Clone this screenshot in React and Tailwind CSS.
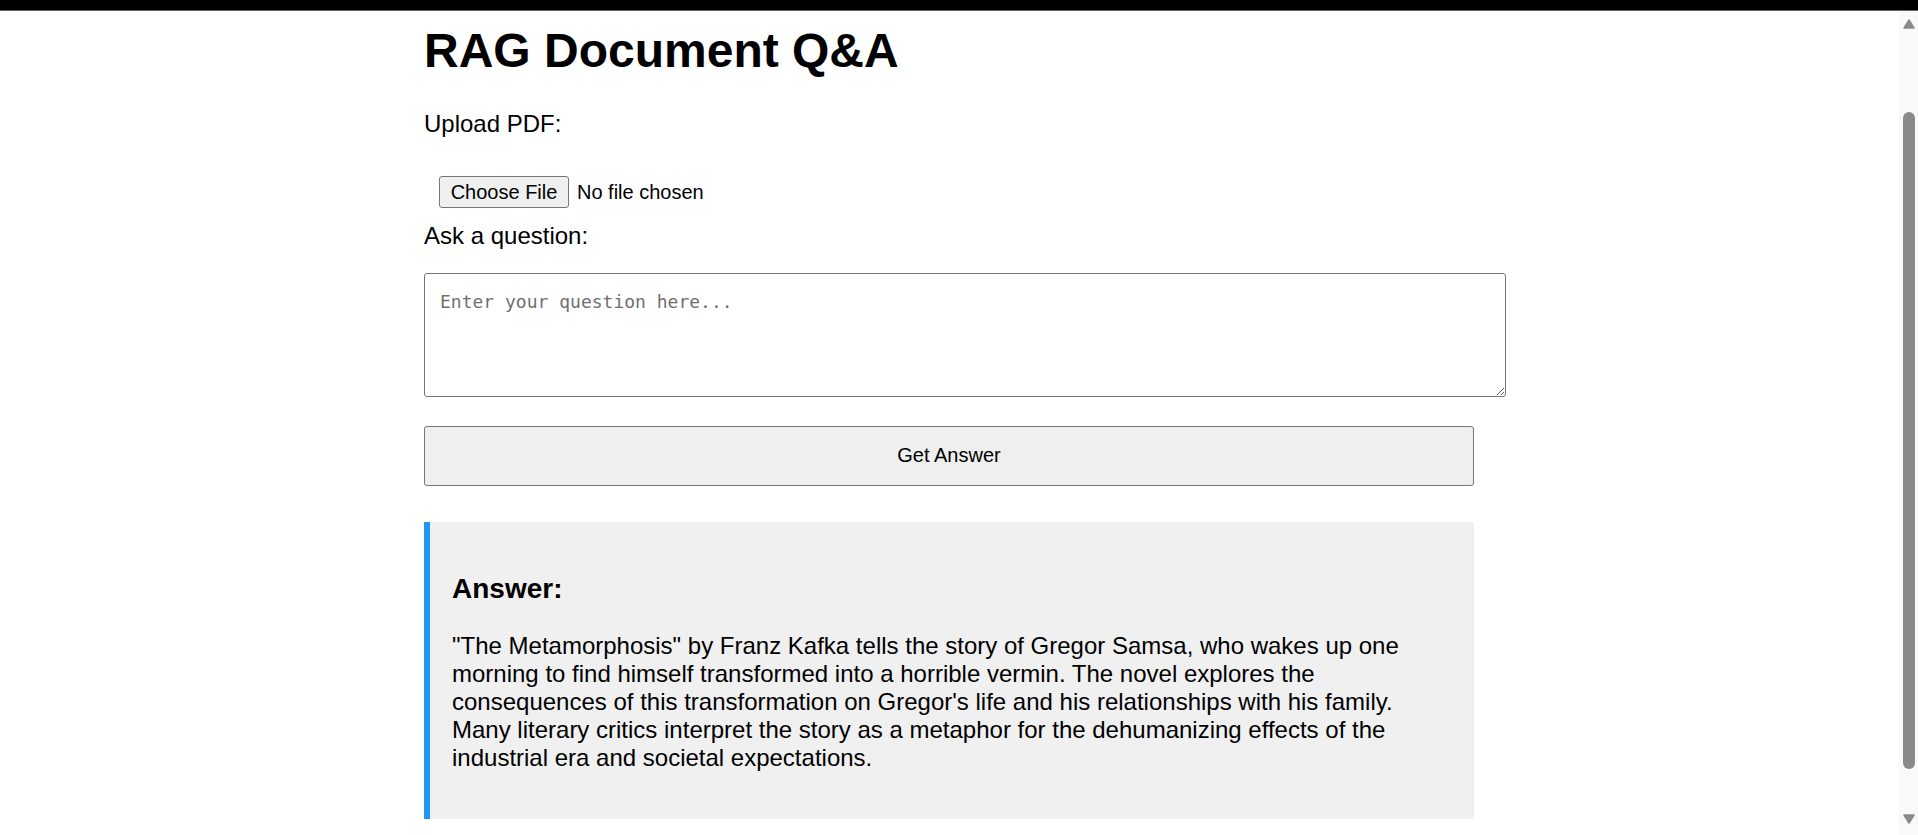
export default function App() {
    return (
        <div className="flex h-[835px] w-[1918px] flex-col overflow-hidden bg-white font-['Liberation_Sans',Arial,sans-serif] text-black">
            <div className="box-border h-[11px] border-b border-[#666] bg-black"></div>
            <div className="flex flex-1">
                <div className="flex-1 overflow-hidden">
                    <div className="mx-auto w-[1051px]">
                        <h1 className="mt-[13px] text-[48px] font-bold leading-[54px]">RAG Document Q&amp;A</h1>

                        <label className="mt-[32px] block text-[24px] leading-[28px]">Upload PDF:</label>
                        <div className="ml-[15px] mt-[38px] flex h-[32px] items-center gap-[8px] text-[20px]">
                            <button className="box-border h-[32px] w-[130px] rounded-[3px] border border-[#767676] bg-[#efefef] text-[20px] leading-none">
                                Choose File
                            </button>
                            <span>No file chosen</span>
                        </div>

                        <label className="mt-[14px] block text-[24px] leading-[28px]">Ask a question:</label>
                        <textarea
                            className="mt-[23px] box-border block h-[124px] w-[1082px] rounded-[3px] border border-[#767676] bg-white px-[15px] pb-[15px] pt-[16px] font-['DejaVu_Sans_Mono',monospace] text-[18px] leading-[23px] placeholder:text-[#6f6f6f]"
                            placeholder="Enter your question here..."
                        ></textarea>

                        <button className="mt-[29px] box-border block h-[60px] w-[1050px] rounded-[3px] border border-[#767676] bg-[#efefef] pb-[2px] text-[20px]">
                            Get Answer
                        </button>

                        <div className="mt-[36px] box-border w-[1050px] border-l-[6px] border-[#2196f3] bg-[#f0f0f0] px-[22px] pb-[47px] pt-[51px]">
                            <h3 className="text-[28px] font-bold leading-[31px]">Answer:</h3>
                            <p className="mt-[28px] text-[24px] leading-[28px]">
                                "The Metamorphosis" by Franz Kafka tells the story of Gregor Samsa, who wakes up one morning to find himself transformed into a horrible vermin. The novel explores the consequences of this transformation on Gregor's life and his relationships with his family. Many literary critics interpret the story as a metaphor for the dehumanizing effects of the industrial era and societal expectations.
                            </p>
                        </div>
                    </div>
                </div>

                {/* scrollbar */}
                <div className="flex w-[19px] flex-col items-center bg-[#f9f9f9]">
                    <svg className="mt-[8px]" width="12" height="10" viewBox="0 0 12 10">
                        <polygon points="6,1 11,9 1,9" fill="#8a8a8a" stroke="#8a8a8a" strokeWidth="1.5" strokeLinejoin="round" />
                    </svg>
                    <div className="mt-[83px] h-[657px] w-[12px] rounded-full bg-[#8a8a8a]"></div>
                    <svg className="mt-[45px]" width="12" height="10" viewBox="0 0 12 10">
                        <polygon points="1,1 11,1 6,9" fill="#8a8a8a" stroke="#8a8a8a" strokeWidth="1.5" strokeLinejoin="round" />
                    </svg>
                </div>
            </div>
        </div>
    );
}
